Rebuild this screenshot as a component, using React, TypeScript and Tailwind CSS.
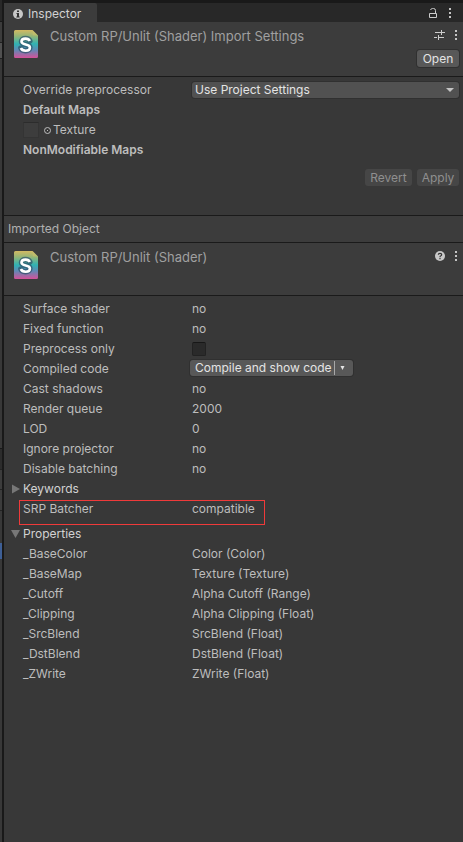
import React from "react";

const importedRows = [
  ["Cast shadows", "no"],
  ["Render queue", "2000"],
  ["LOD", "0"],
  ["Ignore projector", "no"],
  ["Disable batching", "no"],
];

const properties = [
  ["_BaseColor", "Color (Color)"],
  ["_BaseMap", "Texture (Texture)"],
  ["_Cutoff", "Alpha Cutoff (Range)"],
  ["_Clipping", "Alpha Clipping (Float)"],
  ["_SrcBlend", "SrcBlend (Float)"],
  ["_DstBlend", "DstBlend (Float)"],
  ["_ZWrite", "ZWrite (Float)"],
];

function ShaderIcon({ id }: { id: string }) {
  const curve =
    "M15.800 10.900C15.100 9.300 13.500 8.600 11.500 8.600C9 8.600 7.500 9.900 7.500 11.600C7.500 15.700 15.900 13.300 15.900 17.500C15.900 19.500 14 20.700 11.600 20.700C9.300 20.700 7.500 19.800 6.900 18";
  return (
    <svg width="24" height="28" viewBox="0 0 24 28" aria-hidden="true" className="shrink-0">
      <defs>
        <linearGradient id={id} x1="0" y1="0" x2="0" y2="1">
          <stop offset="0" stopColor="#d3b962" />
          <stop offset="0.22" stopColor="#93b577" />
          <stop offset="0.5" stopColor="#2fb2b4" />
          <stop offset="0.72" stopColor="#6387b4" />
          <stop offset="1" stopColor="#d4529a" />
        </linearGradient>
      </defs>
      <path d="M1.500 0H18.500L24 5.500V26.500A1.500 1.500 0 0 1 22.500 28H1.500A1.500 1.500 0 0 1 0 26.500V1.500A1.500 1.500 0 0 1 1.500 0Z" fill={`url(#${id})`} />
      <path d="M18.500 0L24 5.500H20Q18.500 5.500 18.500 4Z" fill="#c9c06c" opacity="0.6" />
      <g fill="none">
        <path d={curve} stroke="#2c5068" strokeWidth="5.500" strokeLinecap="round" opacity="0.7" />
        <path d={curve} stroke="#ffffff" strokeWidth="2.600" />
      </g>
    </svg>
  );
}

function MenuButton({ label }: { label: string }) {
  return (
    <button aria-label={label} className="flex h-4 w-[6px] items-center justify-center">
      <svg width="4" height="12" viewBox="0 0 4 12" fill="#c4c4c4" aria-hidden="true">
        <rect x="1" y="1" width="2" height="2" />
        <rect x="1" y="5" width="2" height="2" />
        <rect x="1" y="9" width="2" height="2" />
      </svg>
    </button>
  );
}

function Row({ label, value }: { label: string; value: React.ReactNode }) {
  return (
    <div className="flex h-5 items-center">
      <dt className="w-[169px] shrink-0">{label}</dt>
      <dd>{value}</dd>
    </div>
  );
}

function Foldout({ label, open }: { label: string; open?: boolean }) {
  return (
    <button aria-expanded={!!open} className="-ml-3 flex h-5 items-center gap-[3px] text-[#d2d2d2]">
      <svg width="9" height="10" viewBox="0 0 9 10" fill="#777777" aria-hidden="true">
        {open ? <path d="M0 1H9L4.500 9Z" /> : <path d="M1 0.500L9 5L1 9.500Z" />}
      </svg>
      {label}
    </button>
  );
}

function NeighbourEdge() {
  return (
    <div aria-hidden="true" className="flex w-1 shrink-0 flex-col border-r-2 border-[#191919] bg-[#383838]">
      <div className="h-[22px] border-b border-[#191919] bg-[#282828]" />
      <div className="h-[21px] border-b border-[#202020] bg-[#3c3c3c]" />
      <div className="h-4 border-b border-[#202020] bg-[#505050]" />
      <div className="h-[389px]" />
      <div className="h-[21px] border-t border-[#191919] bg-[#2c2c2c]" />
      <div className="h-[21px] border-y border-[#232323] bg-[#3c3c3c]" />
      <div className="h-[21px] border-b border-[#232323] bg-[#3c3c3c]" />
      <div className="h-8" />
      <div className="h-4 bg-[#3e5f96]" />
    </div>
  );
}

export default function App() {
  return (
    <div className="flex min-h-screen bg-[#383838] font-['Inter','Liberation_Sans',sans-serif] text-xs leading-4 text-[#bdbdbd]">
      <NeighbourEdge />
      <main className="min-w-0 flex-1">
        <header className="flex h-[22px] items-stretch justify-between border-t-[3px] border-[#191919] bg-[#282828]">
          <h1 className="flex w-[93px] items-center gap-[5px] rounded-tr-xs bg-[#3c3c3c] pt-[2px] pl-[9px] font-normal text-[#d2d2d2]">
            <svg width="10" height="10" viewBox="0 0 10 10" aria-hidden="true">
              <circle cx="5" cy="5" r="5" fill="#c8c8c8" />
              <path d="M4 1.500H6V3H4ZM3.500 4H6V7.500H6.700V8.500H3.300V7.500H4V5H3.500Z" fill="#333333" />
            </svg>
            Inspector
          </h1>
          <div className="flex items-center gap-[9px] pr-[10px]">
            <button aria-label="Lock">
              <svg width="10" height="12" viewBox="0 0 10 12" fill="none" stroke="#cccccc" aria-hidden="true">
                <path d="M1.500 6.500H8.500V10.500H1.500ZM7.500 6.500V3.500Q7.500 1.500 5.500 1.500H4.500Q3 1.500 2.500 3" />
              </svg>
            </button>
            <MenuButton label="Window menu" />
          </div>
        </header>

        <section className="flex h-[55px] border-b border-[#1a1a1a] bg-[#3c3c3c] pr-1 pl-[10px]">
          <div className="pt-2">
            <ShaderIcon id="importer-icon" />
          </div>
          <h2 className="min-w-0 flex-1 pt-1 pl-3 text-[13px] leading-5 font-normal whitespace-nowrap text-[#a0a0a0]">
            Custom RP/Unlit (Shader) Import Settings
          </h2>
          <div className="flex flex-col items-end gap-[7px] pt-[5px]">
            <div className="flex items-center gap-2">
              <button aria-label="Presets">
                <svg width="11" height="12" viewBox="0 0 11 12" fill="none" stroke="#cccccc" aria-hidden="true">
                  <path d="M1 3.500H11M7.500 1V6M0 8.500H3M4.500 6V11M4.500 8.500H10" />
                </svg>
              </button>
              <MenuButton label="Importer menu" />
            </div>
            <button className="h-[17px] w-[42px] rounded-[3px] bg-[#585858] text-[#e4e4e4] shadow-[0_0_0_1px_#303030]">Open</button>
          </div>
        </section>

        <section className="flex h-[139px] flex-col border-b border-[#1a1a1a] pt-[3px] pr-1 pl-[19px]">
          <div className="flex h-5 items-center">
            <label htmlFor="preprocessor" className="w-[169px] shrink-0">Override preprocessor</label>
            <div className="relative flex-1">
              <select id="preprocessor" className="block h-4 w-full appearance-none rounded-[3px] bg-[#515151] pl-[3px] leading-4 text-[#e4e4e4] shadow-[0_0_0_1px_#303030]">
                <option>Use Project Settings</option>
              </select>
              <svg width="8" height="4" viewBox="0 0 8 4" fill="#c4c4c4" aria-hidden="true" className="pointer-events-none absolute top-[6px] right-[5px]">
                <path d="M0 0H8L4 4Z" />
              </svg>
            </div>
          </div>
          <h3 className="h-5 leading-5 font-semibold">Default Maps</h3>
          <div className="flex h-5 items-center">
            <button aria-label="Texture slot" className="h-4 w-4 border border-[#343434] border-t-[#2c2c2c] bg-[#3d3d3d]" />
            <svg width="7" height="7" viewBox="0 0 7 7" fill="none" stroke="#bdbdbd" aria-hidden="true" className="mr-[2px] ml-[5px]">
              <circle cx="3.500" cy="3.500" r="3" />
              <path d="M3 3.500H4" />
            </svg>
            <span>Texture</span>
          </div>
          <h3 className="h-5 leading-5 font-semibold">NonModifiable Maps</h3>
          <div className="mt-[9px] flex justify-end gap-[5px]">
            <button disabled className="h-[17px] w-[47px] rounded-[3px] bg-[#464646] text-[#8f8f8f]">Revert</button>
            <button disabled className="h-[17px] w-[42px] rounded-[3px] bg-[#464646] text-[#8f8f8f]">Apply</button>
          </div>
        </section>

        <h2 className="h-[27px] border-b border-[#1a1a1a] bg-[#3c3c3c] pl-1 leading-[26px] font-normal text-[#b0b0b0]">Imported Object</h2>

        <section className="flex h-[53px] border-b border-[#1a1a1a] bg-[#3c3c3c] pr-1 pl-[10px]">
          <div className="pt-2">
            <ShaderIcon id="object-icon" />
          </div>
          <h2 className="min-w-0 flex-1 pt-1 pl-3 text-[13px] leading-5 font-normal whitespace-nowrap text-[#a0a0a0]">Custom RP/Unlit (Shader)</h2>
          <div className="flex items-start gap-2 pt-[5px]">
            <button aria-label="Help" className="flex h-4 items-center">
              <svg width="10" height="10" viewBox="0 0 10 10" aria-hidden="true">
                <circle cx="5" cy="5" r="5" fill="#c8c8c8" />
                <path d="M3.300 3.700Q3.300 2.300 5 2.300T6.700 3.700Q6.700 4.500 5.500 5Q5 5.200 5 6.200M5 7V8.200" fill="none" stroke="#333333" strokeWidth="1.200" />
              </svg>
            </button>
            <MenuButton label="Object menu" />
          </div>
        </section>

        <dl className="pt-[3px] pl-[19px]">
          <Row label="Surface shader" value="no" />
          <Row label="Fixed function" value="no" />
          <div className="flex h-5 items-center">
            <dt className="w-[169px] shrink-0">
              <label htmlFor="preprocess">Preprocess only</label>
            </dt>
            <dd>
              <input id="preprocess" type="checkbox" className="block h-[14px] w-[14px] appearance-none rounded-xs border border-[#222222] border-t-[#171717] bg-[#2a2a2a]" />
            </dd>
          </div>
          <div className="flex h-5 items-center">
            <dt className="w-[167px] shrink-0">Compiled code</dt>
            <dd className="pb-[2px]">
              <button className="flex h-4 w-[163px] items-center rounded-[3px] bg-[#585858] pl-[5px] text-[#e4e4e4] shadow-[0_0_0_1px_#303030]">
                <span className="flex-1 text-left whitespace-nowrap">Compile and show code</span>
                <span className="h-[14px] w-px bg-[#a8a8a8]" />
                <svg width="18" height="4" viewBox="0 0 18 4" fill="#e4e4e4" aria-hidden="true">
                  <path d="M5.500 0H9.500L7.500 4Z" />
                </svg>
              </button>
            </dd>
          </div>
          {importedRows.map(([label, value]) => (
            <Row key={label} label={label} value={value} />
          ))}
        </dl>
        <div className="pl-[19px]">
          <Foldout label="Keywords" />
        </div>
        <dl className="mt-px -mb-px ml-[15px] flex h-[25px] w-[246px] border border-[#f03a3a] pl-[3px]">
          <dt className="w-[169px] shrink-0">SRP Batcher</dt>
          <dd>compatible</dd>
        </dl>
        <div className="pl-[19px]">
          <Foldout label="Properties" open />
        </div>
        <dl className="pl-[19px]">
          {properties.map(([label, value]) => (
            <Row key={label} label={label} value={value} />
          ))}
        </dl>
      </main>
    </div>
  );
}
